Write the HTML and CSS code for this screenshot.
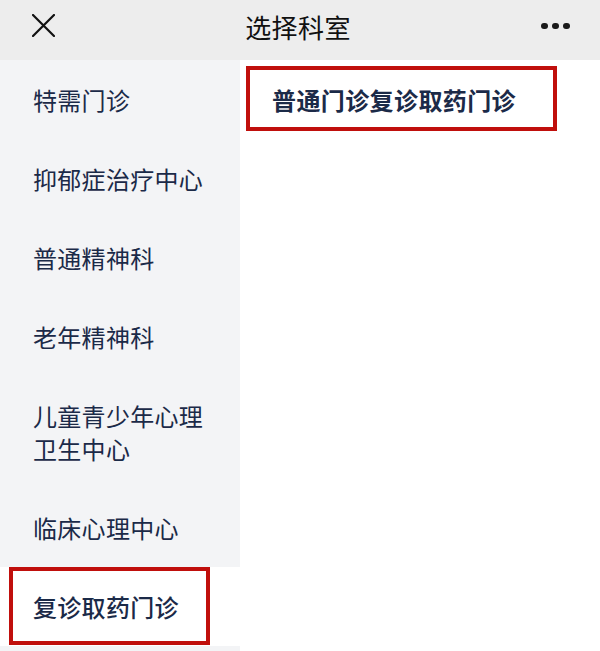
FILE: index.html
```html
<!DOCTYPE html>
<html lang="zh-CN">
<head>
  <meta charset="UTF-8" />
  <meta name="viewport" content="width=device-width, initial-scale=1.0"/>
  <title>选择科室</title>
  <link rel="stylesheet" href="styles.css">
</head>
<body>
  <div class="nav-bar">
    <button class="nav-btn close-btn" aria-label="关闭">
      <svg width="23" height="23" viewBox="0 0 23 23">
        <path d="M1 1 L22 22 M22 1 L1 22" stroke="#111" stroke-width="2.2" fill="none" stroke-linecap="round"/>
      </svg>
    </button>
    <div class="nav-title">选择科室</div>
    <button class="nav-btn more-btn" aria-label="更多">
      <span class="dot"></span><span class="dot"></span><span class="dot"></span>
    </button>
  </div>

  <div class="main">
    <ul class="dept-list">
      <li class="dept-item">特需门诊</li>
      <li class="dept-item">抑郁症治疗中心</li>
      <li class="dept-item">普通精神科</li>
      <li class="dept-item">老年精神科</li>
      <li class="dept-item">儿童青少年心理<br>卫生中心</li>
      <li class="dept-item">临床心理中心</li>
      <li class="dept-item active">复诊取药门诊</li>
    </ul>

    <div class="clinic-panel">
      <div class="clinic-item">普通门诊复诊取药门诊</div>
    </div>
  </div>
</body>
</html>
```

FILE: styles.css
```css
* {
  box-sizing: border-box;
}

body {
  margin: 0;
  height: 651px;
  overflow: hidden;
  font-family: "Noto Sans CJK SC", "Noto Sans", sans-serif;
  color: #1b2a48;
  background: #ffffff;
}

.nav-bar {
  height: 60px;
  background: #ededed;
  display: flex;
  align-items: center;
  justify-content: space-between;
  padding: 0 30px 0 32px;
}

.nav-btn {
  background: none;
  border: none;
  padding: 0;
  cursor: pointer;
  display: flex;
  align-items: center;
}

.close-btn {
  width: 40px;
  height: 23px;
  margin-top: -9px;
}

.nav-title {
  font-size: 26px;
  color: #111111;
  margin-top: -8px;
  margin-left: -6px;
  letter-spacing: 0.4px;
}

.more-btn {
  width: 40px;
  gap: 4.5px;
  justify-content: flex-end;
  margin-top: -8px;
}

.dot {
  width: 6.5px;
  height: 6.5px;
  border-radius: 50%;
  background: #1a1a1a;
}

.main {
  display: flex;
  height: 591px;
}

.dept-list {
  list-style: none;
  margin: 0;
  padding: 0;
  width: 240px;
  background: #f3f4f6;
  flex-shrink: 0;
}

.dept-item {
  position: relative;
  padding: 23px 0 23px 33px;
  font-size: 24px;
  line-height: 33px;
  letter-spacing: 0.3px;
}

.dept-item.active {
  background: #ffffff;
  font-weight: 500;
}

.dept-item.active::after {
  content: "";
  position: absolute;
  left: 9px;
  top: 0;
  width: 193px;
  height: 70px;
  border: 4px solid #c00f0c;
}

.clinic-panel {
  flex: 1;
  padding: 6px 0 0 6px;
}

.clinic-item {
  display: inline-block;
  border: 4px solid #c00f0c;
  padding: 13px 37px 10px 22px;
  font-size: 24px;
  line-height: 34px;
  font-weight: 700;
  letter-spacing: 0.4px;
}
```
